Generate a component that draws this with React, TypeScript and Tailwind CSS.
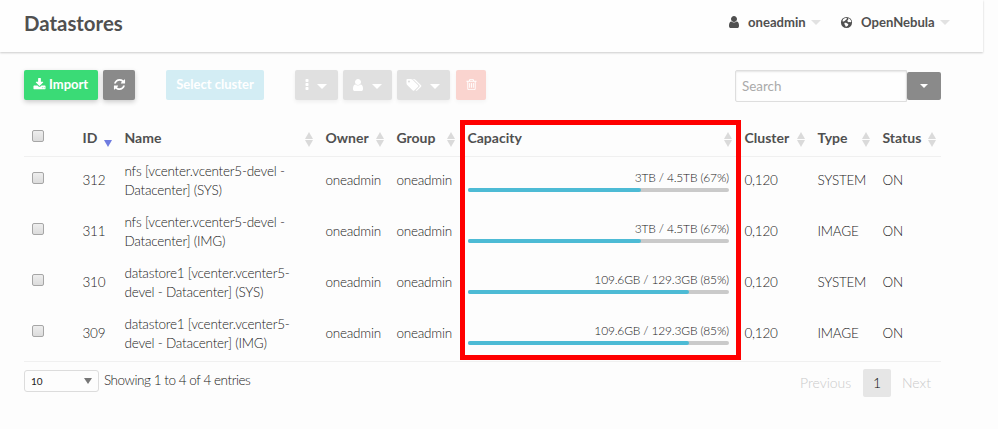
import React from "react";

const paths = {
  user: "M1536 1399q0 109-62.5 187t-150.5 78h-854q-88 0-150.5-78t-62.5-187q0-85 8.5-160.5t31.5-152 58.5-131 94-89 134.5-34.5q131 128 313 128t313-128q76 0 134.5 34.5t94 89 58.5 131 31.5 152 8.5 160.5zm-256-887q0 159-112.5 271.5t-271.5 112.5-271.5-112.5-112.5-271.5 112.5-271.5 271.5-112.5 271.5 112.5 112.5 271.5z",
  download: "M1344 1344q0-26-19-45t-45-19-45 19-19 45 19 45 45 19 45-19 19-45zm256 0q0-26-19-45t-45-19-45 19-19 45 19 45 45 19 45-19 19-45zm128-224v320q0 40-28 68t-68 28h-1472q-40 0-68-28t-28-68v-320q0-40 28-68t68-28h465l135 136q58 56 136 56t136-56l136-136h464q40 0 68 28t28 68zm-325-569q17 41-14 70l-448 448q-18 19-45 19t-45-19l-448-448q-31-29-14-70 17-39 59-39h256v-448q0-26 19-45t45-19h256q26 0 45 19t19 45v448h256q42 0 59 39z",
  refresh: "M1639 1056q0 5-1 7-64 268-268 434.5t-478 166.5q-146 0-282.5-55t-243.5-157l-129 129q-19 19-45 19t-45-19-19-45v-448q0-26 19-45t45-19h448q26 0 45 19t19 45-19 45l-137 137q71 66 161 102t187 36q134 0 250-65t186-179q11-17 53-117 8-23 30-23h192q13 0 22.5 9.5t9.5 22.5zm25-800v448q0 26-19 45t-45 19h-448q-26 0-45-19t-19-45 19-45l138-138q-148-137-349-137-134 0-250 65t-186 179q-11 17-53 117-8 23-30 23h-199q-13 0-22.5-9.5t-9.5-22.5v-7q65-268 270-434.5t480-166.5q146 0 284 55.5t245 156.5l130-129q19-19 45-19t45 19 19 45z",
  ellipsis: "M1088 1248v192q0 40-28 68t-68 28h-192q-40 0-68-28t-28-68v-192q0-40 28-68t68-28h192q40 0 68 28t28 68zm0-512v192q0 40-28 68t-68 28h-192q-40 0-68-28t-28-68v-192q0-40 28-68t68-28h192q40 0 68 28t28 68zm0-512v192q0 40-28 68t-68 28h-192q-40 0-68-28t-28-68v-192q0-40 28-68t68-28h192q40 0 68 28t28 68z",
  tags: "M384 448q0-53-37.5-90.5t-90.5-37.5-90.5 37.5-37.5 90.5 37.5 90.5 90.5 37.5 90.5-37.5 37.5-90.5zm1067 576q0 53-37 90l-491 492q-39 37-91 37-53 0-90-37l-715-716q-38-37-64.5-101t-26.5-117v-416q0-52 38-90t90-38h416q53 0 117 26.5t102 64.5l715 714q37 39 37 91zm384 0q0 53-37 90l-491 492q-39 37-91 37-36 0-59-14t-53-45l470-470q37-37 37-90 0-52-37-91l-715-714q-38-38-102-64.5t-117-26.5h224q53 0 117 26.5t102 64.5l715 714q37 39 37 91z",
  trash: "M704 736v576q0 14-9 23t-23 9h-64q-14 0-23-9t-9-23v-576q0-14 9-23t23-9h64q14 0 23 9t9 23zm256 0v576q0 14-9 23t-23 9h-64q-14 0-23-9t-9-23v-576q0-14 9-23t23-9h64q14 0 23 9t9 23zm256 0v576q0 14-9 23t-23 9h-64q-14 0-23-9t-9-23v-576q0-14 9-23t23-9h64q14 0 23 9t9 23zm128 724v-948h-896v948q0 22 7 40.5t14.5 27 10.5 8.5h832q3 0 10.5-8.5t14.5-27 7-40.5zm-672-1076h448l-48-117q-7-9-17-11h-317q-10 2-17 11zm928 32v64q0 14-9 23t-23 9h-96v948q0 83-47 143.5t-113 60.5h-832q-66 0-113-58.5t-47-141.5v-952h-96q-14 0-23-9t-9-23v-64q0-14 9-23t23-9h309l70-167q15-37 54-63t79-26h320q40 0 79 26t54 63l70 167h309q14 0 23 9t9 23z",
  globe: "M896 128a768 768 0 1 0 0 1536a768 768 0 0 0 0-1536zM660 300l190-60l110 90l-30 130l-120 60l-130 130l-110 60l-60 60l-130-20l-30-110l80-180l130-120zM1110 300l210 90l170 210l60 220l-130 50l-90-60l-150 60l-160-130l10-150l110-90zM640 920l190 0l240 150l90 110l-90 150l-130 90l-120 110l-80-180l-80-130l-60-160z",
};

function Icon({ name, size = 14, className = "" }: { name: keyof typeof paths; size?: number; className?: string }) {
  return (
    <svg viewBox="0 0 1792 1792" width={size} height={size} fill="currentColor" fillRule={name === "globe" ? "evenodd" : "nonzero"} className={`shrink-0 overflow-visible ${className}`}>
      <path d={paths[name]} />
    </svg>
  );
}

function Caret({ className = "" }: { className?: string }) {
  return (
    <svg viewBox="0 0 10 5" width="10" height="5" fill="currentColor" className={`shrink-0 ${className}`}>
      <path d="M0 0h10L5 5z" />
    </svg>
  );
}

function Sort({ active = false }: { active?: boolean }) {
  return (
    <svg viewBox="0 0 8 15" width="8" height="15" className="mt-[3px] shrink-0">
      {!active && <path d="M0 7l4-7 4 7z" fill="#dadada" />}
      <path d="M0 8h8l-4 7z" fill={active ? "#6f7ce0" : "#dadada"} />
    </svg>
  );
}

function Check({ className = "" }: { className?: string }) {
  return <div className={`h-3 w-3 rounded-[2px] border border-[#a6a6a6] bg-linear-to-b from-[#eeeeee] to-[#dcdcdc] ${className}`} />;
}

const btn = "flex h-[30px] items-center rounded-[2px] text-white";
const cols = "grid grid-cols-[58.5px_42px_201px_71px_71px_277px_73px_65px_58.5px]";

const rows = [
  { id: "312", name: ["nfs [vcenter.vcenter5-devel -", "Datacenter] (SYS)"], cap: "3TB / 4.5TB (67%)", used: 66.3, type: "SYSTEM" },
  { id: "311", name: ["nfs [vcenter.vcenter5-devel -", "Datacenter] (IMG)"], cap: "3TB / 4.5TB (67%)", used: 66.3, type: "IMAGE" },
  { id: "310", name: ["datastore1 [vcenter.vcenter5-", "devel - Datacenter] (SYS)"], cap: "109.6GB / 129.3GB (85%)", used: 84.8, type: "SYSTEM" },
  { id: "309", name: ["datastore1 [vcenter.vcenter5-", "devel - Datacenter] (IMG)"], cap: "109.6GB / 129.3GB (85%)", used: 84.8, type: "IMAGE" },
];

const heads = ["ID", "Name", "Owner", "Group", "Capacity", "Cluster", "Type", "Status"];

export default function App() {
  return (
    <div className="relative h-[429px] w-[998px] overflow-hidden bg-[#fdfdfd] font-['Lato',sans-serif] text-[14px] font-light text-[#222]">
      <header className="flex h-[52px] w-[983px] items-start bg-[#fefefe] pl-6 font-bold text-[#505050] shadow-[0_1px_2px_rgba(0,0,0,0.2)]">
        <h1 className="mt-[9px] w-[704px] text-[20.4px] leading-7">Datastores</h1>
        <div className="mt-3 flex h-5 items-center text-[13.1px]">
          <Icon name="user" className="-ml-px" />
          <span className="ml-[7px] w-[63px] pt-[2px]">oneadmin</span>
          <Caret className="text-[#e2e2e2]" />
          <Icon name="globe" size={13} className="ml-[19px]" />
          <span className="ml-[8px] w-[79px] pt-[2px]">OpenNebula</span>
          <Caret className="text-[#e2e2e2]" />
        </div>
      </header>

      <div className="flex items-start pt-[18px] pl-6 text-[13px] font-bold">
        <button className={`${btn} w-[74px] bg-[#3adb76] pb-px pl-[9px] shadow-[0_2px_5px_rgba(0,0,0,0.2)]`}>
          <Icon name="download" size={13} />
          <span className="ml-[3px]">Import</span>
        </button>
        <button className={`${btn} ml-[5px] w-8 justify-center bg-[#8a8a8a] pb-px shadow-[0_2px_5px_rgba(0,0,0,0.2)]`}>
          <Icon name="refresh" size={13} />
        </button>
        <button className={`${btn} ml-[31px] w-[98px] justify-center bg-[#d3edf4] pb-px`}>Select cluster</button>
        <button className={`${btn} ml-[31px] w-[43px] bg-[#e0e0e0] pl-[5px] shadow-[0_2px_4px_rgba(0,0,0,0.06)]`}>
          <Icon name="ellipsis" />
          <Caret className="mt-[3px] ml-[3px]" />
        </button>
        <button className={`${btn} ml-[5px] w-[49px] bg-[#e0e0e0] pl-2 shadow-[0_2px_4px_rgba(0,0,0,0.06)]`}>
          <Icon name="user" className="-mt-px" />
          <Caret className="mt-[3px] ml-[7px]" />
        </button>
        <button className={`${btn} ml-[5px] w-[53px] bg-[#e0e0e0] pl-[10px] shadow-[0_2px_4px_rgba(0,0,0,0.06)]`}>
          <Icon name="tags" className="-mt-px" />
          <Caret className="mt-[3px] ml-[9px]" />
        </button>
        <button className={`${btn} ml-[6px] w-[30px] justify-center bg-[#fad4cf] pb-px shadow-[0_2px_4px_rgba(0,0,0,0.04)]`}>
          <Icon name="trash" size={13} />
        </button>
        <div className="ml-[249px] flex h-8 w-[172px] items-center rounded-l-[2px] border border-[#dedede] bg-[#fefefe] pl-[6px] text-[13.4px] font-normal text-[#aaa] shadow-[inset_0_1px_2px_rgba(10,10,10,0.1)]">
          Search
        </div>
        <button className="mt-[2px] flex h-7 w-[34px] items-center justify-center rounded-[2px] bg-[#8a8a8a] text-white">
          <svg viewBox="0 0 8 4" width="8" height="4" fill="currentColor"><path d="M0 0h8L4 4z" /></svg>
        </button>
      </div>

      <main className="mt-[20px] ml-6 w-[917px]">
        <div className={`${cols} h-[35px] border-b border-[#f0f0f0] text-[14px] font-bold text-[#505050]`}>
          <Check className="mt-2 ml-2" />
          {heads.map((h) => (
            <div key={h} className={`flex h-[31px] items-center justify-between ${h === "Status" ? "pr-[5px]" : "pr-[13px]"}`}>
              <span>{h}</span>
              <Sort active={h === "ID"} />
            </div>
          ))}
        </div>
        <div className="text-[13.5px] tracking-[-0.23px]">
          {rows.map((r) => (
            <div key={r.id} className={`${cols} h-[51px] items-center pb-[6px]`}>
              <Check className="mb-1 ml-2" />
              <span className="pt-px">{r.id}</span>
              <span className="pt-[3px] leading-[19px] whitespace-nowrap">{r.name[0]}<br />{r.name[1]}</span>
              <span className="pt-px">oneadmin</span>
              <span className="pt-px">oneadmin</span>
              <div className="ml-[0.5px] w-[261px] pt-1">
                <div className="text-right text-[12px] leading-[14px] tracking-[-0.17px]">{r.cap}</div>
                <div className="mt-[3px] h-1 rounded-full bg-[#cacaca]">
                  <div className="h-1 rounded-full bg-[#4dbbd5]" style={{ width: `${r.used}%` }} />
                </div>
              </div>
              <span className="pt-px">0,120</span>
              <span className="pt-px">{r.type}</span>
              <span className="pt-px">ON</span>
            </div>
          ))}
        </div>
        <div className="flex items-start border-t border-[#f0f0f0]">
          <div className="mt-2 flex h-[22px] w-[75px] items-center justify-between rounded-[3px] border border-[#dcdcdc] pr-[6px] pl-[6px] text-[10px] font-normal">
            10
            <svg viewBox="0 0 8 6" width="8" height="6" fill="#777"><path d="M0 0h8L4 6z" /></svg>
          </div>
          <span className="mt-2 ml-[5px] w-[696px] text-[13.5px] leading-[21px] tracking-[-0.45px]">Showing 1 to 4 of 4 entries</span>
          <div className="mt-[7px] flex h-7 items-center text-[#cacaca]">
            <span className="w-[63px] pb-px">Previous</span>
            <span className="flex h-7 w-7 items-center justify-center rounded-[2px] bg-[#e6e6e6] pb-px text-[#0a0a0a]">1</span>
            <span className="ml-[11px] pb-px">Next</span>
          </div>
        </div>
      </main>

      <div className="absolute top-[120px] left-[460px] h-[240px] w-[281px] border-[5px] border-[#ff0000]" />
    </div>
  );
}
